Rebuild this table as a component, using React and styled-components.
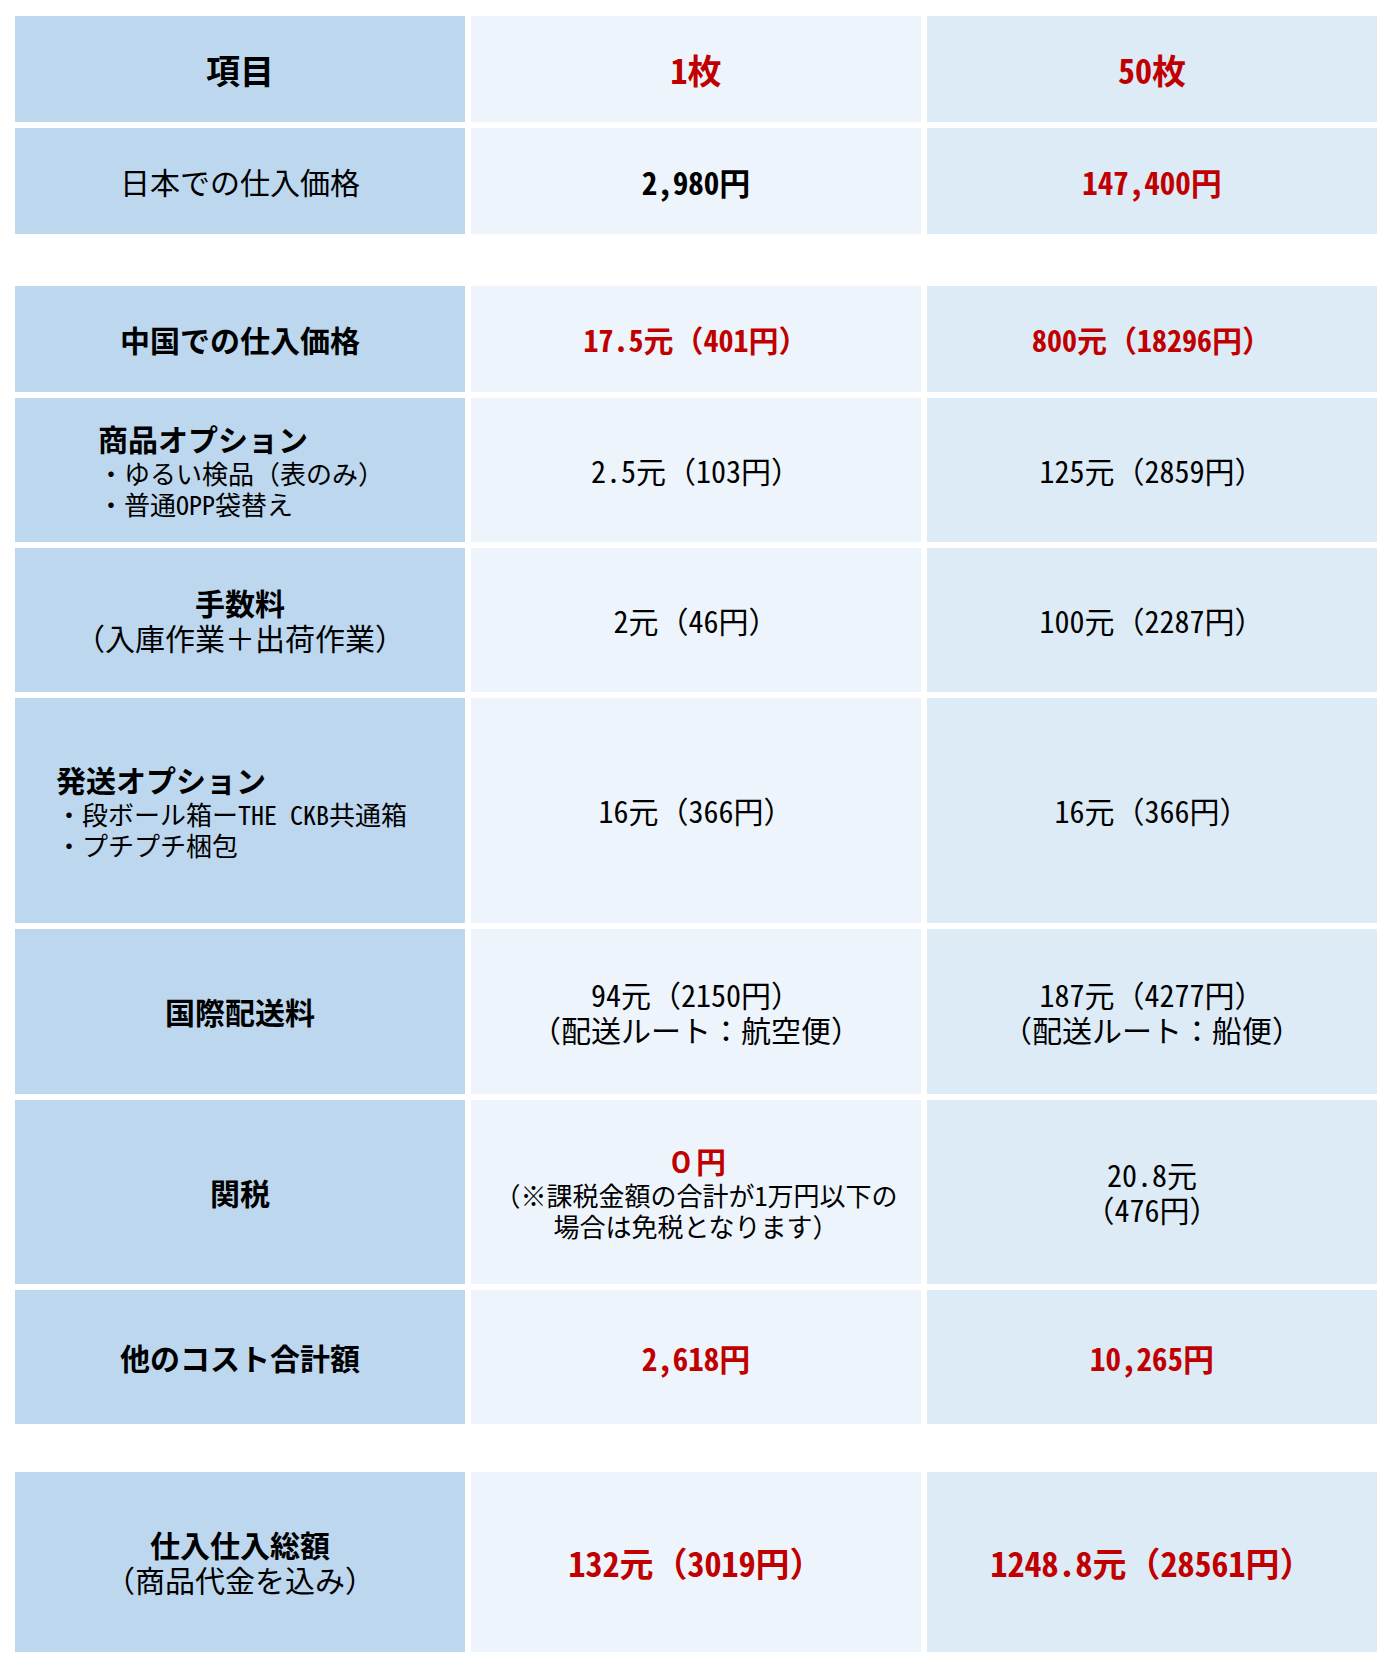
import React from "react";
import styled, { createGlobalStyle } from "styled-components";

const GlobalStyle = createGlobalStyle`
  body {
    margin: 0;
    background: #ffffff;
    color: #000000;
    font-family: "Noto Sans CJK JP", sans-serif;
  }
`;

const tones = {
  label: "#bdd7ee",
  one: "#edf4fb",
  fifty: "#ddebf7"
};

const Page = styled.div`
  width: 1392px;
  box-sizing: border-box;
  padding: 16px 15px 15px;
  display: flex;
  flex-direction: column;
`;

const Group = styled.div`
  display: flex;
  flex-direction: column;
  gap: 6px;
  margin-top: ${p => p.$space || 0}px;
`;

const Row = styled.div`
  display: grid;
  grid-template-columns: repeat(3, 1fr);
  column-gap: 6px;
  height: ${p => p.$height}px;
`;

const Cell = styled.div`
  display: flex;
  flex-direction: column;
  justify-content: center;
  align-items: ${p => (p.$indent ? "flex-start" : "center")};
  padding-left: ${p => p.$indent || 0}px;
  text-align: ${p => (p.$indent ? "left" : "center")};
  background: ${p => tones[p.$tone]};
`;

const Text = styled.div`
  font-size: ${p => p.$size || 30}px;
  line-height: 35px;
  font-weight: ${p => (p.$bold ? 700 : 400)};
  color: ${p => (p.$red ? "#c00000" : "#000000")};
  white-space: pre;
`;

const Note = styled.div`
  font-size: 26px;
  line-height: 31px;
  white-space: pre;

  ${Text} + & {
    margin-top: 1px;
  }
`;

// half-width latin, like the narrow digits of the original sheet
const Latin = styled.span`
  font-feature-settings: "hwid" 1;
`;

const groups = [
  {
    space: 0,
    rows: [
      {
        height: 106,
        label: [{ t: "項目", b: true, size: 34 }],
        one: [{ t: "1枚", b: true, r: true, size: 34 }],
        fifty: [{ t: "50枚", b: true, r: true, size: 34 }]
      },
      {
        height: 106,
        label: [{ t: "日本での仕入価格" }],
        one: [{ t: "2,980円", b: true, size: 31 }],
        fifty: [{ t: "147,400円", b: true, r: true, size: 31 }]
      }
    ]
  },
  {
    space: 52,
    rows: [
      {
        height: 106,
        label: [{ t: "中国での仕入価格", b: true }],
        one: [{ t: "17.5元（401円）", b: true, r: true }],
        fifty: [{ t: "800元（18296円）", b: true, r: true }]
      },
      {
        height: 144,
        indent: 83,
        label: [
          { t: "商品オプション", b: true },
          { t: "・ゆるい検品（表のみ）", s: true },
          { t: "・普通OPP袋替え", s: true }
        ],
        one: [{ t: "2.5元（103円）" }],
        fifty: [{ t: "125元（2859円）" }]
      },
      {
        height: 144,
        label: [{ t: "手数料", b: true }, { t: "（入庫作業＋出荷作業）" }],
        one: [{ t: "2元（46円）" }],
        fifty: [{ t: "100元（2287円）" }]
      },
      {
        height: 225,
        indent: 41,
        label: [
          { t: "発送オプション", b: true },
          { t: "・段ボール箱ーTHE CKB共通箱", s: true },
          { t: "・プチプチ梱包", s: true }
        ],
        one: [{ t: "16元（366円）" }],
        fifty: [{ t: "16元（366円）" }]
      },
      {
        height: 165,
        label: [{ t: "国際配送料", b: true }],
        one: [{ t: "94元（2150円）" }, { t: "（配送ルート：航空便）" }],
        fifty: [{ t: "187元（4277円）" }, { t: "（配送ルート：船便）" }]
      },
      {
        height: 184,
        label: [{ t: "関税", b: true }],
        one: [
          { t: "０円", b: true, r: true },
          { t: "（※課税金額の合計が1万円以下の", s: true },
          { t: "場合は免税となります）", s: true }
        ],
        fifty: [{ t: "20.8元" }, { t: "（476円）" }]
      },
      {
        height: 134,
        label: [{ t: "他のコスト合計額", b: true }],
        one: [{ t: "2,618円", b: true, r: true, size: 31 }],
        fifty: [{ t: "10,265円", b: true, r: true, size: 31 }]
      }
    ]
  },
  {
    space: 48,
    rows: [
      {
        height: 180,
        label: [{ t: "仕入仕入総額", b: true }, { t: "（商品代金を込み）" }],
        one: [{ t: "132元（3019円）", b: true, r: true, size: 34 }],
        fifty: [{ t: "1248.8元（28561円）", b: true, r: true, size: 34 }]
      }
    ]
  }
];

const Runs = ({ text }) =>
  text
    .split(/([\x20-\x7e]+)/)
    .map((part, i) =>
      /^[\x20-\x7e]+$/.test(part) ? <Latin key={i}>{part}</Latin> : part
    );

const Lines = ({ lines }) =>
  lines.map((line, i) =>
    line.s ? (
      <Note key={i}>
        <Runs text={line.t} />
      </Note>
    ) : (
      <Text key={i} $bold={line.b} $red={line.r} $size={line.size}>
        <Runs text={line.t} />
      </Text>
    )
  );

class App extends React.Component {
  render() {
    return (
      <Page>
        <GlobalStyle />
        {groups.map((group, g) => (
          <Group key={g} $space={group.space}>
            {group.rows.map((row, i) => (
              <Row key={i} $height={row.height}>
                <Cell $tone="label" $indent={row.indent}>
                  <Lines lines={row.label} />
                </Cell>
                <Cell $tone="one">
                  <Lines lines={row.one} />
                </Cell>
                <Cell $tone="fifty">
                  <Lines lines={row.fifty} />
                </Cell>
              </Row>
            ))}
          </Group>
        ))}
      </Page>
    );
  }
}

export default App;
